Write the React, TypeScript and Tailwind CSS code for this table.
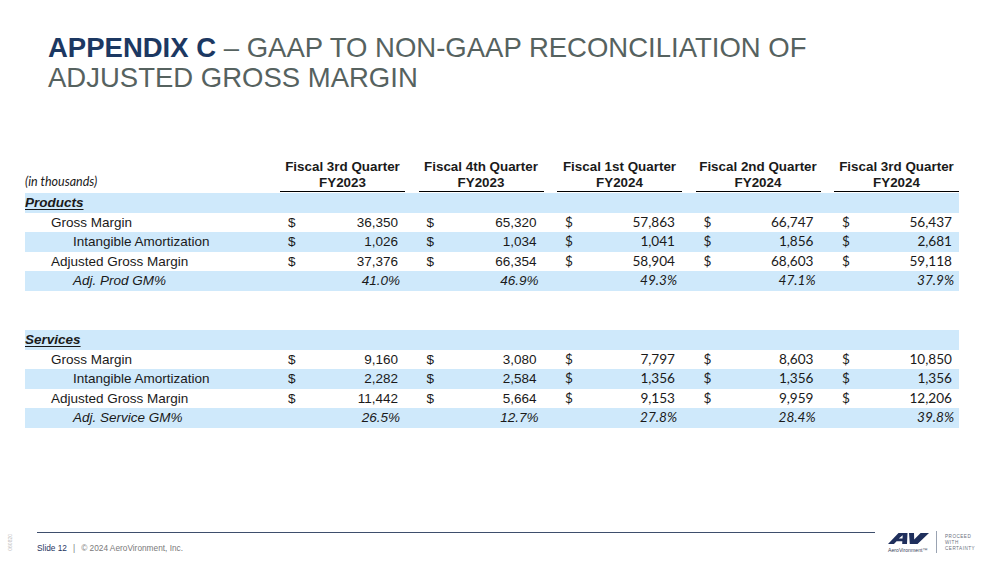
import React from "react";

type Cell = { v: string; d?: boolean };
type Row = {
  label: string;
  indent: "head" | "one" | "two";
  blue?: boolean;
  italic?: boolean;
  cells: Cell[];
};

const ARIAL = "font-['Liberation_Sans',Arial,sans-serif]";
const CALIBRI = "font-['Lato','Liberation_Sans',sans-serif]";

const headers = [
  ["Fiscal 3rd Quarter", "FY2023"],
  ["Fiscal 4th Quarter", "FY2023"],
  ["Fiscal 1st Quarter", "FY2024"],
  ["Fiscal 2nd Quarter", "FY2024"],
  ["Fiscal 3rd Quarter", "FY2024"],
];

const money = (vals: string[]): Cell[] => vals.map((v) => ({ v, d: true }));
const pct = (vals: string[]): Cell[] => vals.map((v) => ({ v }));

const products: Row[] = [
  { label: "Products", indent: "head", blue: true, cells: [] },
  { label: "Gross Margin", indent: "one", cells: money(["36,350", "65,320", "57,863", "66,747", "56,437"]) },
  { label: "Intangible Amortization", indent: "two", blue: true, cells: money(["1,026", "1,034", "1,041", "1,856", "2,681"]) },
  { label: "Adjusted Gross Margin", indent: "one", cells: money(["37,376", "66,354", "58,904", "68,603", "59,118"]) },
  { label: "Adj. Prod GM%", indent: "two", blue: true, italic: true, cells: pct(["41.0%", "46.9%", "49.3%", "47.1%", "37.9%"]) },
];

const services: Row[] = [
  { label: "Services", indent: "head", blue: true, cells: [] },
  { label: "Gross Margin", indent: "one", cells: money(["9,160", "3,080", "7,797", "8,603", "10,850"]) },
  { label: "Intangible Amortization", indent: "two", blue: true, cells: money(["2,282", "2,584", "1,356", "1,356", "1,356"]) },
  { label: "Adjusted Gross Margin", indent: "one", cells: money(["11,442", "5,664", "9,153", "9,959", "12,206"]) },
  { label: "Adj. Service GM%", indent: "two", blue: true, italic: true, cells: pct(["26.5%", "12.7%", "27.8%", "28.4%", "39.8%"]) },
];

// label column + gap lands the first quarter column at x=280
const GRID = "grid grid-cols-[241.5px_repeat(5,125px)] gap-x-[13.5px]";

function TableRow({ row }: { row: Row }) {
  const labelCls =
    row.indent === "head"
      ? "font-bold italic underline underline-offset-2 pl-0"
      : row.indent === "one"
      ? "pl-[26px]"
      : "pl-[48px]";
  return (
    <div
      className={`${GRID} h-[19.6px] items-center text-[#1a1a1a] ${row.blue ? "bg-[#cfe9fb]" : "bg-white"}`}
    >
      <div className={`${ARIAL} text-[13.5px] leading-none whitespace-nowrap ${row.italic ? "italic" : ""} ${labelCls}`}>
        {row.label}
      </div>
      {row.cells.map((c, i) => {
        const font = i < 2 ? `${ARIAL} text-[13.5px]` : `${CALIBRI} text-[13.6px]`;
        return c.d ? (
          <div key={i} className={`${font} leading-none flex justify-between pl-[8px] pr-[7px]`}>
            <span>$</span>
            <span>{c.v}</span>
          </div>
        ) : (
          <div key={i} className={`${font} leading-none italic text-right pr-[5px]`}>
            {c.v}
          </div>
        );
      })}
    </div>
  );
}

function AvLogo() {
  return (
    <svg width="41" height="11" viewBox="0 0 41 11" className="block">
      <path
        d="M0 11 L10.5 0 L19.5 0 L19 11 L14.2 11 L14.3 8.3 L8.6 8.3 L6 11 Z M10.8 5.6 L14.5 5.6 L14.7 2.2 Z"
        fill="#1f2f5c"
        fillRule="evenodd"
      />
      <path d="M21 0 L26 0 L26.2 6.6 L32.6 0 L41 0 L29.5 11 L21.8 11 Z" fill="#1f2f5c" />
    </svg>
  );
}

export default function App() {
  return (
    <div className={`${ARIAL} relative flex h-[562px] w-[999px] flex-col overflow-hidden bg-white`}>
      <h1 className="pl-[48px] pt-[33px] text-[27.5px] leading-[30px] text-[#56625f]">
        <span className="font-bold text-[#1c3862]">APPENDIX C</span> – GAAP TO NON-GAAP RECONCILIATION OF
        <br />
        ADJUSTED GROSS MARGIN
      </h1>

      <div className="ml-[25px] mt-[66px] w-[934px]">
        <div className={`${GRID} items-end`}>
          <div className={`${CALIBRI} text-[12.5px] italic leading-[16px] text-[#1a1a1a] pb-[2px]`}>(in thousands)</div>
          {headers.map(([a, b], i) => (
            <div
              key={i}
              className="border-b-[1.5px] border-black text-center text-[13.4px] font-bold leading-[16px] text-[#1a1a1a] whitespace-nowrap"
            >
              <div>{a}</div>
              <div>{b}</div>
            </div>
          ))}
        </div>
        <div className="mt-[1px]">
          {products.map((r, i) => (
            <TableRow key={i} row={r} />
          ))}
        </div>
        <div className="mt-[39px]">
          {services.map((r, i) => (
            <TableRow key={i} row={r} />
          ))}
        </div>
      </div>

      <div className="mt-auto flex h-[37px] items-start pl-[7px]">
        <div className="mt-[9px] w-[6px] rotate-180 text-[5px] leading-[6px] text-[#bdbdbd] [writing-mode:vertical-rl]">
          060820
        </div>
        <div className="ml-[24px] mt-[7px] w-[838px] border-t border-[#3e4e6c] pt-[10px] text-[8.3px] leading-[10px] text-[#7a7a7a]">
          <span className="text-[#1f3561]">Slide 12</span>
          <span className="mx-[6px]">|</span>© 2024 AeroVironment, Inc.
        </div>
        <div className="ml-[13px] mt-[8px] flex flex-col items-start">
          <AvLogo />
          <div className="mt-[3px] text-[5.2px] leading-[6px] text-[#3a4660]">AeroVironment™</div>
        </div>
        <div className="ml-[7px] mt-[6px] h-[22px] w-px bg-[#9aa3b2]" />
        <div className="ml-[8px] mt-[9px] text-[4.6px] leading-[6px] tracking-[0.5px] text-[#6b7280]">
          <div>PROCEED</div>
          <div>WITH</div>
          <div>CERTAINTY</div>
        </div>
      </div>
    </div>
  );
}
